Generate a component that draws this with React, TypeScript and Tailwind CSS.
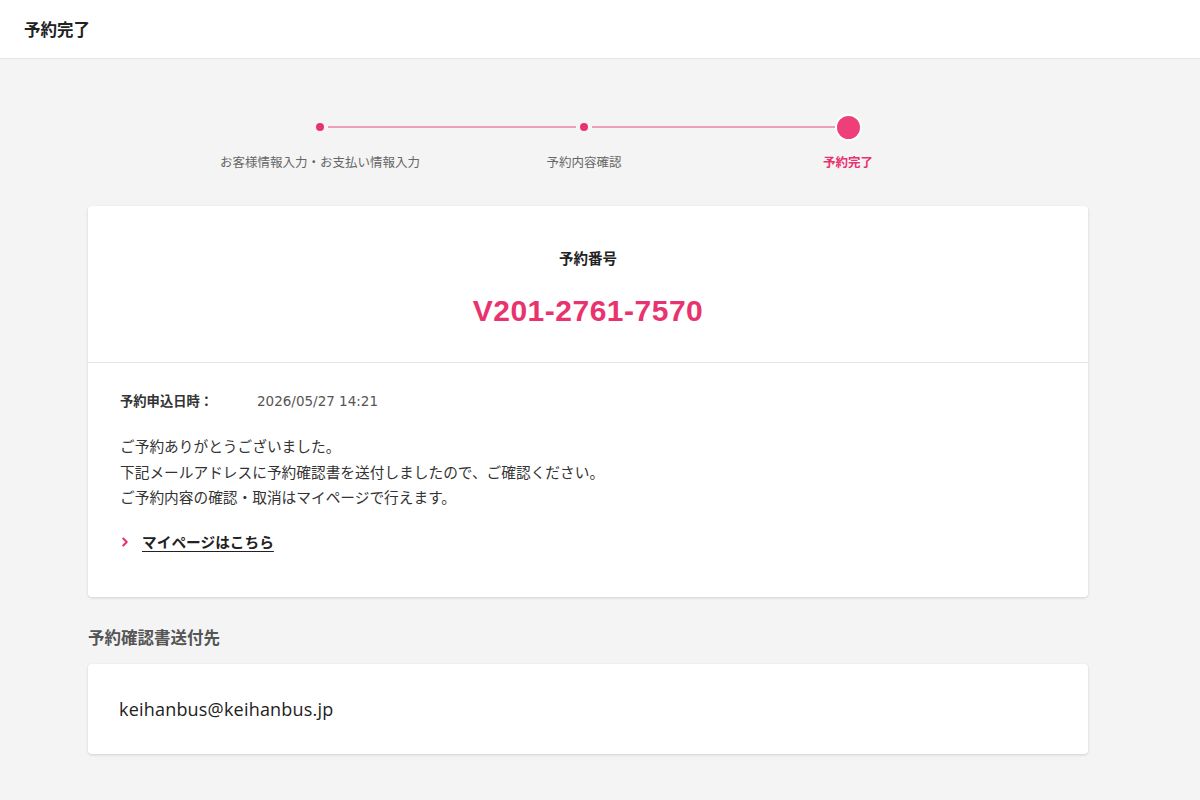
import { ChevronRight } from "lucide-react";

const jp = "font-['Noto_Sans_CJK_JP',sans-serif]";

const steps = [
  { label: "お客様情報入力・お支払い情報入力", current: false },
  { label: "予約内容確認", current: false },
  { label: "予約完了", current: true },
];

function Stepper() {
  return (
    <div className="ml-[188px] grid w-[792px] grid-cols-3 pt-[56px]">
      {steps.map((step, i) => (
        <div key={step.label} className="flex flex-col items-center">
          <div className="flex h-[24px] w-full items-center">
            <div className={"h-[2px] flex-1 " + (i > 0 ? "bg-[#eba0bd]" : "")} />
            {step.current ? (
              <div className="h-[27px] w-[27px] rounded-full border-[2px] border-white bg-[#ef3f79]" />
            ) : (
              <div className="mx-[4px] h-[8px] w-[8px] rounded-full bg-[#e8336e]" />
            )}
            <div className={"h-[2px] flex-1 " + (i < steps.length - 1 ? "bg-[#eba0bd]" : "")} />
          </div>
          <div
            className={
              "mt-[13px] text-[12.5px] leading-[20px] " +
              (step.current ? "font-bold text-[#e8336e]" : "text-[#666]")
            }
          >
            {step.label}
          </div>
        </div>
      ))}
    </div>
  );
}

export default function App() {
  return (
    <div className={"min-h-[800px] bg-[#f4f4f4] " + jp}>
      <header className="flex h-[59px] items-center border-b border-[#e6e6e6] bg-white px-[24px]">
        <h1 className="text-[16.5px] font-bold text-[#222]">予約完了</h1>
      </header>

      <Stepper />

      <main className="mx-[88px] mt-[34px] w-[1000px] pb-[46px]">
        <section className="rounded-[4px] bg-white shadow-[0_1px_3px_rgba(0,0,0,0.15)]">
          <div className="flex h-[157px] flex-col items-center border-b border-[#e6e6e6] pt-[41px]">
            <div className="text-[14.5px] font-bold leading-[22px] text-[#222]">予約番号</div>
            <div className="mt-[22px] font-['Liberation_Sans',sans-serif] text-[30px] font-bold leading-[40px] tracking-[0.5px] text-[#e8336e]">
              V201-2761-7570
            </div>
          </div>

          <div className="px-[32px] pt-[28px] pb-[43px]">
            <div className="flex items-center leading-[20px]">
              <span className="w-[137px] text-[13.3px] font-bold text-[#333]">予約申込日時：</span>
              <span className="font-['DejaVu_Sans',sans-serif] text-[13.5px] text-[#555]">2026/05/27 14:21</span>
            </div>

            <div className="mt-[22px] text-[14.7px] leading-[25.5px] text-[#333]">
              <p>ご予約ありがとうございました。</p>
              <p>下記メールアドレスに予約確認書を送付しましたので、ご確認ください。</p>
              <p>ご予約内容の確認・取消はマイページで行えます。</p>
            </div>

            <a href="#" className="mt-[20px] flex items-center text-[14.7px] leading-[24px]">
              <ChevronRight size={14} strokeWidth={3.5} className="-ml-[2px] text-[#e8336e]" />
              <span className="ml-[10px] font-bold text-[#222] underline underline-offset-[3px]">
                マイページはこちら
              </span>
            </a>
          </div>
        </section>

        <h2 className="mt-[29px] text-[16.5px] font-bold leading-[22px] text-[#555]">予約確認書送付先</h2>

        <section className="mt-[16px] flex h-[90px] items-center rounded-[4px] bg-white px-[31px] pt-[2px] shadow-[0_1px_3px_rgba(0,0,0,0.15)]">
          <span className="font-['Open_Sans',sans-serif] text-[18px] tracking-[0.2px] text-[#222]">keihanbus@keihanbus.jp</span>
        </section>
      </main>
    </div>
  );
}
